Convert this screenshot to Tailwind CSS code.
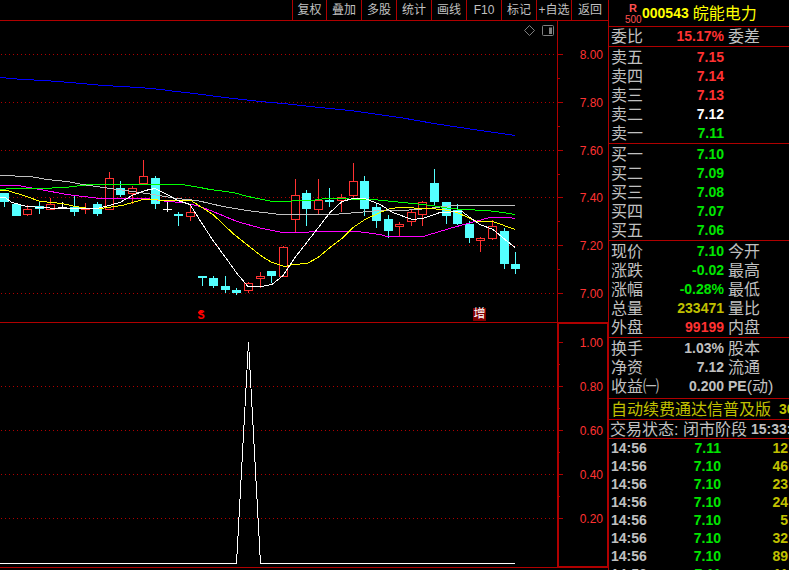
<!DOCTYPE html>
<html lang="zh-CN">
<head>
    <meta charset="UTF-8" />
    <meta name="viewport" content="width=device-width,initial-scale=1.0" />
    <title>000543 皖能电力</title>
    <script src="https://cdn.jsdelivr.net/npm/@tailwindcss/browser@4"></script>
</head>
<body class="bg-black text-[#c0c0c0] font-['Liberation_Sans','Noto_Sans_CJK_SC',sans-serif]">

    <div class="flex h-screen overflow-hidden">

        <!-- Gráficos -->
        <main class="flex-1 min-w-0 flex flex-col">
            <!-- Toolbar -->
            <nav class="flex justify-end shrink-0 h-[21px] border-b border-[#b00000] text-xs">
                <button class="w-[34px] border-l border-[#b00000] whitespace-nowrap">复权</button>
                <button class="w-[35px] border-l border-[#b00000] whitespace-nowrap">叠加</button>
                <button class="w-[35px] border-l border-[#b00000] whitespace-nowrap">多股</button>
                <button class="w-[35px] border-l border-[#b00000] whitespace-nowrap">统计</button>
                <button class="w-[35px] border-l border-[#b00000] whitespace-nowrap">画线</button>
                <button class="w-[35px] border-l border-[#b00000] whitespace-nowrap">F10</button>
                <button class="w-[35px] border-l border-[#b00000] whitespace-nowrap">标记</button>
                <button class="w-[35px] border-l border-[#b00000] whitespace-nowrap">+自选</button>
                <button class="w-[37px] border-l border-[#b00000] whitespace-nowrap">返回</button>
            </nav>

            <!-- Velas -->
            <section class="relative flex shrink-0 border-b border-[#b00000]">
                <svg class="flex-1 min-w-0 h-[301px]" viewBox="0 21 557 301" preserveAspectRatio="none" shape-rendering="crispEdges" fill="none">
                    <path stroke="#b00000" stroke-dasharray="1 3" d="M1 54.5H556M1 102.5H556M1 150.5H556M1 197.5H556M1 245.5H556M1 293.5H556" />
                    <g id="candles"></g>
                    <polyline stroke="#0000ff" points="0,77.5 22,79.5 45,80.5 70,82.5 104,85.5 139,87.5 161,89.5 176,91.5 194,93.5 225,97.5 260,101.5 283,103.5 320,107.5 350,110.5 400,117.5 434,123.5 480,130.5 515,135.5" />
                    <polyline stroke="#c0c0c0" points="0,175.5 30,176.5 47,179.5 67,181.5 83,184.5 103,187.5 133,191.5 153,194.5 177,198.5 197,200.5 223,206.5 247,210.5 280,214.5 333,214.5 357,212.5 380,210.5 403,210.5 428,208.5 452,205.5 515,205.5" />
                    <polyline stroke="#ff00ff" points="0,185.5 18,185.5 40,189.5 67,194.5 100,198.5 147,198.5 167,201.5 183,202.5 200,206.5 213,211.5 237,221.5 262,228.5 283,232.5 335,231.5 357,231.5 380,234.5 387,236.5 423,236.5 453,227.5 490,217.5 508,217.5 515,218.5" />
                    <polyline stroke="#00ff00" points="0,189.5 12,188.5 40,188.5 65,187.5 90,184.5 182,184.5 200,187.5 210,189.5 233,192.5 248,196.5 272,201.5 312,200.5 325,198.5 373,199.5 403,202.5 432,205.5 450,208.5 463,209.5 487,210.5 503,212.5 515,214.5" />
                    <polyline stroke="#ffff00" points="0,190.5 7,190.5 17,193.5 27,196.5 40,201.5 53,202.5 67,204.5 75,206.5 90,208.5 100,208.5 122,205.5 143,199.5 173,200.5 191,200.5 213,214.5 233,233.5 248,245.5 262,256.5 272,262.5 285,266.5 293,264.5 307,263.5 318,257.5 330,247.5 342,238.5 353,227.5 365,219.5 380,212.5 390,208.5 400,207.5 428,208.5 443,209.5 457,212.5 477,221.5 493,221.5 515,229.5" />
                    <polyline stroke="#ffffff" points="0,197.5 5,197.5 12,202.5 27,206.5 58,208.5 97,208.5 105,206.5 120,202.5 132,195.5 145,190.5 155,188.5 165,193.5 178,200.5 190,204.5 202,223.5 213,240.5 227,259.5 237,273.5 248,286.5 261,286.5 272,284.5 283,275.5 295,257.5 313,234.5 330,212.5 342,201.5 353,198.5 365,198.5 380,204.5 393,212.5 412,219.5 423,218.5 440,212.5 462,211.5 470,217.5 480,224.5 493,229.5 505,239.5 515,247.5" />
                    <path fill="#ff0000" d="M200 310h1v1h1v1h1v1h-5v-1h1v-1h1z" />
                </svg>
                <svg class="w-[51px] h-[301px] shrink-0" viewBox="557 21 51 301" shape-rendering="crispEdges">
                    <path stroke="#b00000" d="M557.500 21V322M558 54.500h5M558 102.500h5M558 150.500h5M558 197.500h5M558 245.500h5M558 293.500h5M558 78.500h2M558 126.500h2M558 174.500h2M558 221.500h2M558 269.500h2" />
                    <g fill="#ff3232" font-size="12" text-anchor="end">
                        <text x="603" y="59">8.00</text>
                        <text x="603" y="107">7.80</text>
                        <text x="603" y="155">7.60</text>
                        <text x="603" y="202">7.40</text>
                        <text x="603" y="250">7.20</text>
                        <text x="603" y="298">7.00</text>
                    </g>
                </svg>
                <!-- iconos y marcas sobre el gráfico -->
                <svg class="absolute top-1 right-[52px] w-8 h-3" viewBox="0 0 32 12" fill="none" stroke="#808080">
                    <path d="M5.500 .5L10.500 5.500L5.500 10.500L.5 5.500Z" />
                    <rect x="18.500" y=".5" width="11" height="10" rx="1" />
                    <path d="M25 2.500h3v6.500h-3z" fill="#808080" stroke="none" />
                </svg>
                <span class="absolute bottom-0 right-[403px] w-2 text-center text-xs/[12px] font-bold text-[#ff0000] font-['Liberation_Mono',monospace]">S</span>
                <span class="absolute bottom-px right-[122px] w-[13px] h-[13px] bg-[#800000] text-white text-xs/[13px] text-center">增</span>
            </section>

            <!-- Indicador -->
            <section class="flex shrink-0">
                <svg class="flex-1 min-w-0 h-[245px]" viewBox="0 323 557 245" preserveAspectRatio="none" shape-rendering="crispEdges" fill="none">
                    <path stroke="#b00000" stroke-dasharray="1 3" d="M1 386.500H556M1 430.500H556M1 474.500H556M1 518.500H556" />
                    <path stroke="#b00000" d="M0 567.500H557" />
                    <polyline stroke="#ffffff" points="0,563.5 236.5,563.5 248.5,342 260.5,563.5 515,563.5" />
                </svg>
                <svg class="w-[51px] h-[245px] shrink-0" viewBox="557 323 51 245" shape-rendering="crispEdges">
                    <rect x="558" y="323" width="50" height="244" fill="none" stroke="#b00000" stroke-width="2" />
                    <path stroke="#b00000" d="M558 342.500h5M558 386.500h5M558 430.500h5M558 474.500h5M558 518.500h5M558 364.500h2M558 408.500h2M558 452.500h2M558 496.500h2" />
                    <g fill="#ff3232" font-size="12" text-anchor="end">
                        <text x="603" y="347">1.00</text>
                        <text x="603" y="391">0.80</text>
                        <text x="603" y="435">0.60</text>
                        <text x="603" y="479">0.40</text>
                        <text x="603" y="523">0.20</text>
                    </g>
                </svg>
            </section>
        </main>

        <!-- Panel de cotización -->
        <aside class="w-[181px] shrink-0 overflow-hidden border-l border-[#b00000] text-base/[19px] whitespace-nowrap">
            <header class="flex h-[27px] items-center border-b border-[#b00000] text-[#ffff00]">
                <div class="w-8 pl-4 pt-px text-[#ff5050] text-center">
                    <div class="text-[11px]/[11px] font-bold">R</div>
                    <div class="text-[10px]/[11px]">500</div>
                </div>
                <h1 class="flex gap-1 pl-px"><b class="text-sm/[19px]">000543</b>皖能电力</h1>
            </header>

            <table class="w-full table-fixed">
                <colgroup><col class="w-[50px]" /><col class="w-[65px]" /><col /></colgroup>
                <tbody class="border-b border-[#b00000]">
                    <tr><th class="pl-0.5 text-left font-normal">委比</th><td class="text-right text-sm/[19px] font-bold text-[#ff3232]">15.17%</td><th class="pl-1 text-left font-normal">委差</th></tr>
                </tbody>
                <tbody class="border-b border-[#b00000]">
                    <tr><th class="pl-0.5 pt-px text-left font-normal">卖五</th><td class="pt-px text-right text-sm/[19px] font-bold text-[#ff3232]">7.15</td><td></td></tr>
                    <tr><th class="pl-0.5 text-left font-normal">卖四</th><td class="text-right text-sm/[19px] font-bold text-[#ff3232]">7.14</td><td></td></tr>
                    <tr><th class="pl-0.5 text-left font-normal">卖三</th><td class="text-right text-sm/[19px] font-bold text-[#ff3232]">7.13</td><td></td></tr>
                    <tr><th class="pl-0.5 text-left font-normal">卖二</th><td class="text-right text-sm/[19px] font-bold text-white">7.12</td><td></td></tr>
                    <tr><th class="pl-0.5 text-left font-normal">卖一</th><td class="text-right text-sm/[19px] font-bold text-[#00e600]">7.11</td><td></td></tr>
                </tbody>
                <tbody class="border-b border-[#b00000]">
                    <tr><th class="pl-0.5 pt-px text-left font-normal">买一</th><td class="pt-px text-right text-sm/[19px] font-bold text-[#00e600]">7.10</td><td></td></tr>
                    <tr><th class="pl-0.5 text-left font-normal">买二</th><td class="text-right text-sm/[19px] font-bold text-[#00e600]">7.09</td><td></td></tr>
                    <tr><th class="pl-0.5 text-left font-normal">买三</th><td class="text-right text-sm/[19px] font-bold text-[#00e600]">7.08</td><td></td></tr>
                    <tr><th class="pl-0.5 text-left font-normal">买四</th><td class="text-right text-sm/[19px] font-bold text-[#00e600]">7.07</td><td></td></tr>
                    <tr><th class="pl-0.5 text-left font-normal">买五</th><td class="text-right text-sm/[19px] font-bold text-[#00e600]">7.06</td><td></td></tr>
                </tbody>
                <tbody class="border-b border-[#b00000]">
                    <tr><th class="pl-0.5 pt-px text-left font-normal">现价</th><td class="pt-px text-right text-sm/[19px] font-bold text-[#00e600]">7.10</td><th class="pl-1 pt-px text-left font-normal">今开</th></tr>
                    <tr><th class="pl-0.5 text-left font-normal">涨跌</th><td class="text-right text-sm/[19px] font-bold text-[#00e600]">-0.02</td><th class="pl-1 text-left font-normal">最高</th></tr>
                    <tr><th class="pl-0.5 text-left font-normal">涨幅</th><td class="text-right text-sm/[19px] font-bold text-[#00e600]">-0.28%</td><th class="pl-1 text-left font-normal">最低</th></tr>
                    <tr><th class="pl-0.5 text-left font-normal">总量</th><td class="text-right text-sm/[19px] font-bold text-[#c0c000]">233471</td><th class="pl-1 text-left font-normal">量比</th></tr>
                    <tr><th class="pl-0.5 text-left font-normal">外盘</th><td class="text-right text-sm/[19px] font-bold text-[#ff3232]">99199</td><th class="pl-1 text-left font-normal">内盘</th></tr>
                </tbody>
                <tbody class="border-b border-[#b00000]">
                    <tr><th class="pl-0.5 pt-px text-left font-normal">换手</th><td class="pt-px text-right text-sm/[19px] font-bold">1.03%</td><th class="pl-1 pt-px text-left font-normal">股本</th></tr>
                    <tr><th class="pl-0.5 text-left font-normal">净资</th><td class="text-right text-sm/[19px] font-bold">7.12</td><th class="pl-1 text-left font-normal">流通</th></tr>
                    <tr><th class="pl-0.5 pb-0.5 text-left font-normal">收益㈠</th><td class="pb-0.5 text-right text-sm/[19px] font-bold">0.200</td><th class="flex pl-1 pb-0.5 font-normal"><b class="text-sm/[19px]">PE</b>(动)</th></tr>
                </tbody>
            </table>

            <p class="flex h-[21px] items-center gap-2 pl-0.5 border-b border-[#b00000] text-[#c0c000]">自动续费通达信普及版 <b class="text-sm/[19px]">300</b></p>
            <p class="flex h-[19px] items-center gap-1 pl-px border-b border-[#b00000]">交易状态: 闭市阶段 <b class="text-sm/[19px]">15:33:00</b></p>

            <!-- Operaciones -->
            <table class="w-full table-fixed text-sm/[18px] font-bold">
                <tbody>
                    <tr><td class="pl-0.5">14:56</td><td class="w-[52px] text-right text-[#00e600]">7.11</td><td class="w-[68px] pr-px text-right text-[#c0c000]">12</td></tr>
                    <tr><td class="pl-0.5">14:56</td><td class="text-right text-[#00e600]">7.10</td><td class="pr-px text-right text-[#c0c000]">46</td></tr>
                    <tr><td class="pl-0.5">14:56</td><td class="text-right text-[#00e600]">7.10</td><td class="pr-px text-right text-[#c0c000]">23</td></tr>
                    <tr><td class="pl-0.5">14:56</td><td class="text-right text-[#00e600]">7.10</td><td class="pr-px text-right text-[#c0c000]">24</td></tr>
                    <tr><td class="pl-0.5">14:56</td><td class="text-right text-[#00e600]">7.10</td><td class="pr-px text-right text-[#c0c000]">5</td></tr>
                    <tr><td class="pl-0.5">14:56</td><td class="text-right text-[#00e600]">7.10</td><td class="pr-px text-right text-[#c0c000]">32</td></tr>
                    <tr><td class="pl-0.5">14:56</td><td class="text-right text-[#00e600]">7.10</td><td class="pr-px text-right text-[#c0c000]">89</td></tr>
                    <tr><td class="pl-0.5">14:56</td><td class="text-right text-[#00e600]">7.11</td><td class="pr-px text-right text-[#c0c000]">11</td></tr>
                </tbody>
            </table>
        </aside>
    </div>

    <script>
        // x, máximo, techo del cuerpo, base del cuerpo, mínimo, tipo (d = baja, u = sube, n = plano)
        const candles = [
            [4, 193, 193, 202, 207, 'd'], [16, 204, 204, 216, 216, 'd'], [27, 205, 209, 215, 216, 'u'],
            [39, 202, 206, 209, 214, 'd'], [50, 198, 204, 210, 210, 'u'], [62, 202, 207, 208, 209, 'n'],
            [74, 196, 207, 212, 216, 'd'], [85, 203, 208, 210, 214, 'u'], [97, 202, 204, 214, 216, 'd'],
            [109, 172, 178, 210, 210, 'u'], [120, 181, 188, 195, 197, 'd'], [132, 186, 188, 194, 204, 'u'],
            [143, 160, 176, 184, 185, 'u'], [155, 176, 178, 204, 209, 'd'], [167, 200, 209, 210, 212, 'n'],
            [178, 212, 214, 216, 226, 'd'], [190, 204, 212, 217, 221, 'u'], [202, 276, 276, 278, 286, 'd'],
            [213, 276, 278, 286, 288, 'd'], [225, 276, 286, 290, 293, 'd'], [236, 288, 290, 293, 295, 'd'],
            [248, 282, 283, 291, 293, 'u'], [260, 272, 276, 279, 288, 'u'], [271, 271, 271, 276, 283, 'd'],
            [283, 246, 247, 277, 277, 'u'], [295, 179, 195, 220, 232, 'u'], [306, 190, 193, 209, 226, 'd'],
            [318, 179, 200, 210, 214, 'u'], [329, 188, 200, 202, 207, 'd'], [341, 194, 197, 201, 212, 'u'],
            [353, 163, 181, 196, 197, 'u'], [364, 176, 181, 209, 216, 'd'], [376, 203, 207, 221, 228, 'd'],
            [388, 215, 219, 231, 238, 'd'], [399, 222, 224, 227, 236, 'u'], [411, 210, 212, 222, 226, 'u'],
            [422, 201, 202, 215, 226, 'u'], [434, 169, 183, 202, 206, 'd'], [446, 202, 202, 216, 224, 'd'],
            [457, 204, 210, 224, 225, 'd'], [469, 221, 224, 238, 243, 'd'], [480, 237, 238, 241, 252, 'u'],
            [492, 220, 226, 239, 240, 'u'], [504, 228, 231, 264, 269, 'd'], [515, 252, 264, 269, 274, 'd']
        ];
        const colors = { d: '#54ffff', u: '#ff3232', n: '#ffffff' };
        const layer = document.getElementById('candles');

        function rect(x, y, w, h, fill) {
            const el = document.createElementNS('http://www.w3.org/2000/svg', 'rect');
            el.setAttribute('x', x);
            el.setAttribute('y', y);
            el.setAttribute('width', w);
            el.setAttribute('height', h);
            el.setAttribute('fill', fill);
            layer.appendChild(el);
        }

        candles.forEach(([x, high, top, bottom, low, type]) => {
            rect(x, high, 1, low - high, colors[type]);
            rect(x - 4, top, 9, bottom - top, colors[type]);
            if (type === 'u' && bottom - top > 2) rect(x - 3, top + 1, 7, bottom - top - 2, '#000000');
        });
    </script>
</body>
</html>
